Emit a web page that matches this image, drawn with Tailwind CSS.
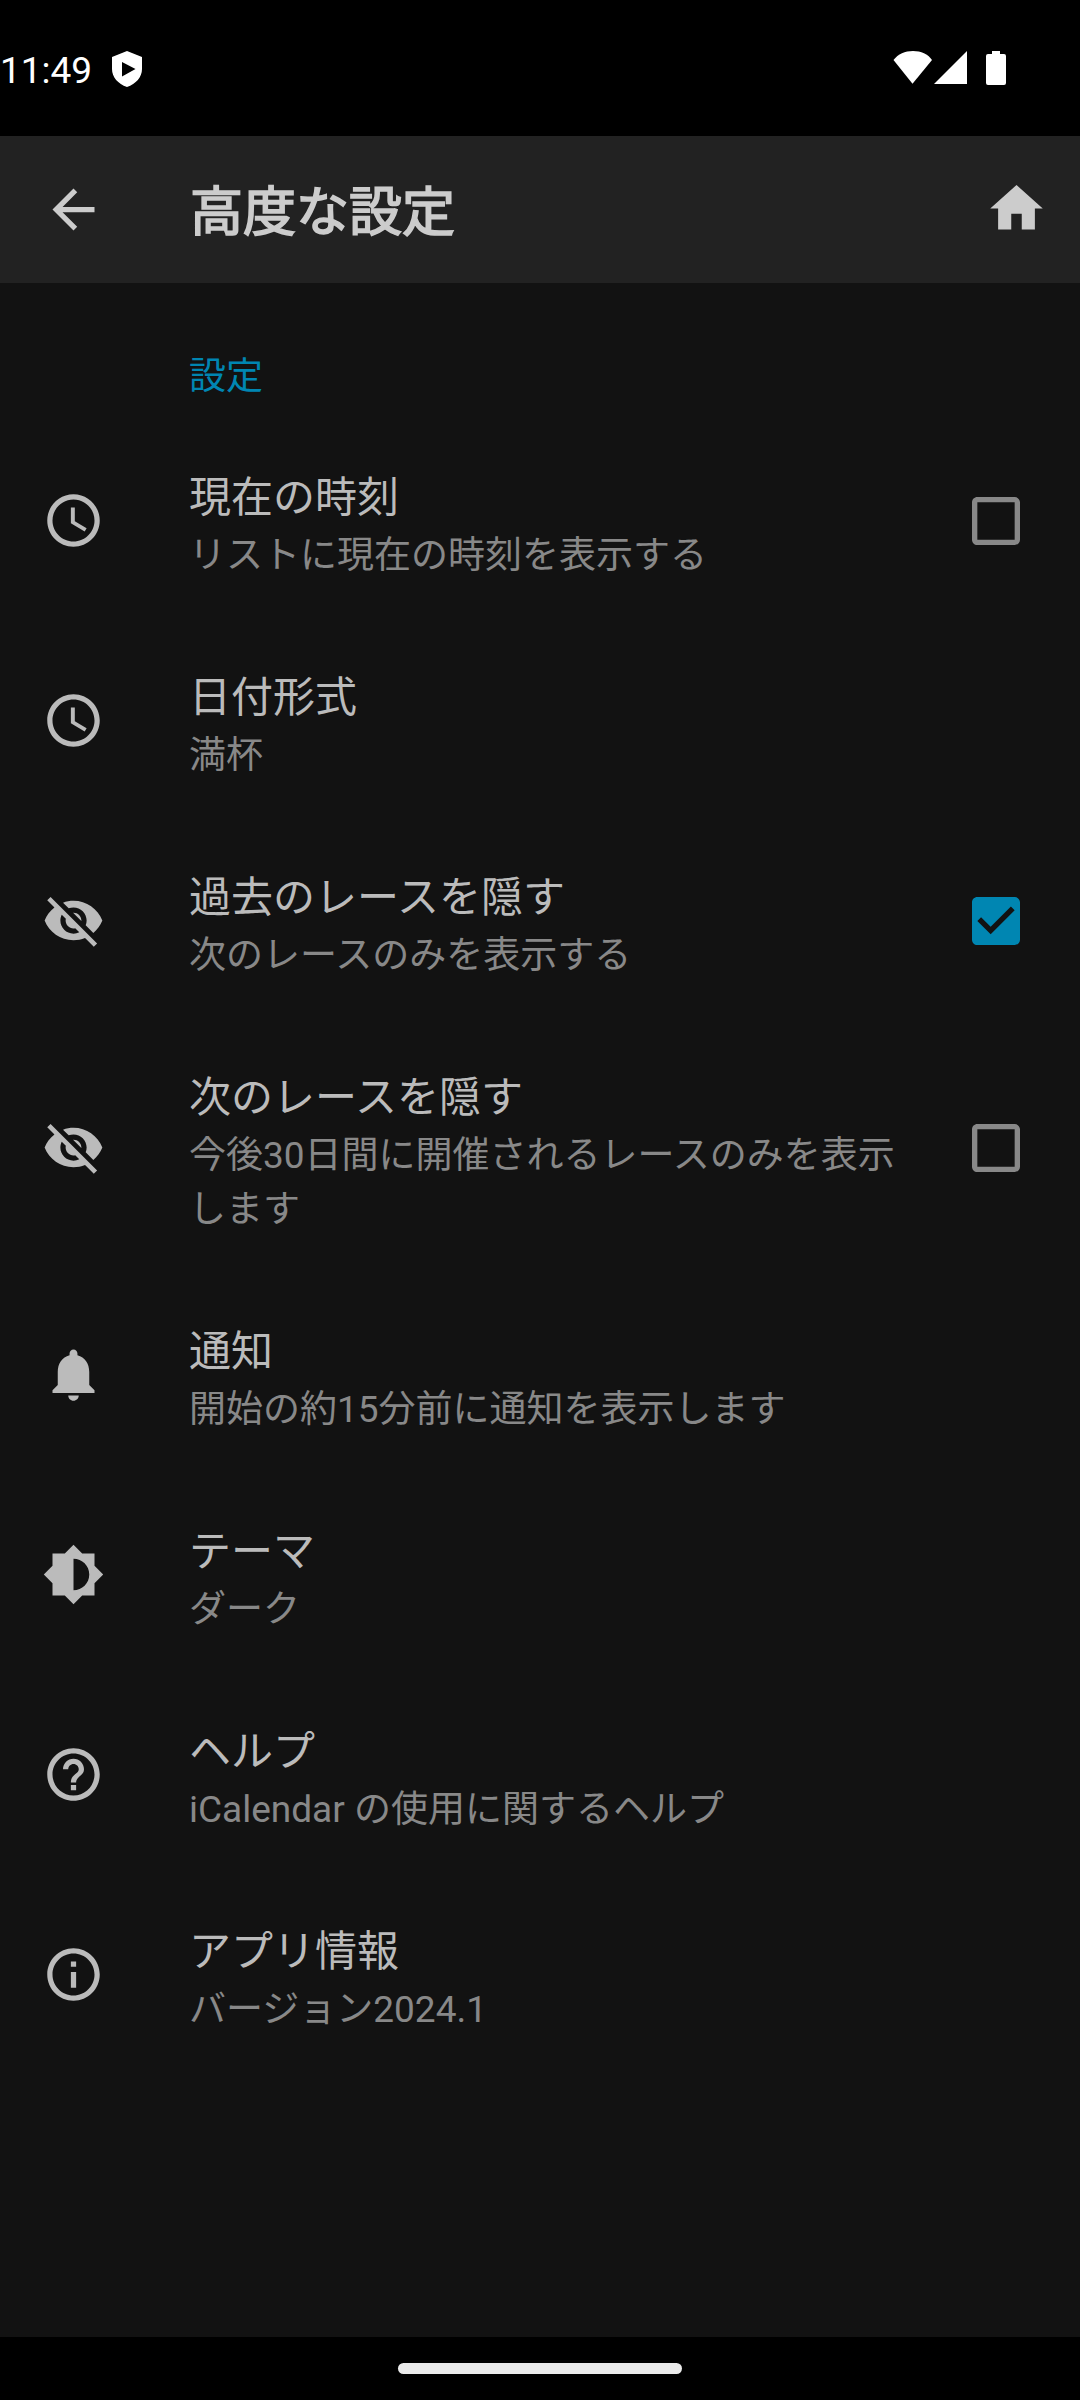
<!DOCTYPE html>
<html lang="ja">
<head>
<meta charset="utf-8">
<title>高度な設定</title>
<script src="https://cdn.jsdelivr.net/npm/@tailwindcss/browser@4"></script>
</head>
<body class="bg-black">
<svg class="hidden">
  <symbol id="clock" viewBox="0 0 24 24"><path d="M11.99 2C6.47 2 2 6.48 2 12s4.47 10 9.99 10C17.52 22 22 17.52 22 12S17.52 2 11.99 2zM12 20c-4.42 0-8-3.58-8-8s3.58-8 8-8 8 3.58 8 8-3.58 8-8 8zM12.5 7H11v6l5.25 3.15.75-1.23-4.5-2.67z"/></symbol>
  <symbol id="eye-off" viewBox="0 0 24 24"><path d="M12 7c2.76 0 5 2.24 5 5 0 .65-.13 1.26-.36 1.83l2.92 2.92c1.51-1.26 2.7-2.89 3.43-4.75-1.73-4.39-6-7.5-11-7.5-1.4 0-2.74.25-3.98.7l2.16 2.16C10.74 7.13 11.35 7 12 7zM2 4.27l2.28 2.28.46.46C3.08 8.3 1.78 10.02 1 12c1.73 4.39 6 7.5 11 7.5 1.55 0 3.03-.3 4.38-.84l.42.42L19.73 22 21 20.73 3.27 3 2 4.27zM7.53 9.8l1.55 1.55c-.05.21-.08.43-.08.65 0 1.66 1.34 3 3 3 .22 0 .44-.03.65-.08l1.55 1.55c-.67.33-1.41.53-2.2.53-2.76 0-5-2.24-5-5 0-.79.2-1.53.53-2.2zm4.31-.78l3.15 3.15.02-.16c0-1.66-1.34-3-3-3l-.17.01z"/></symbol>
  <symbol id="box" viewBox="0 0 24 24"><path d="M19 5v14H5V5h14m0-2H5c-1.1 0-2 .9-2 2v14c0 1.1.9 2 2 2h14c1.1 0 2-.9 2-2V5c0-1.1-.9-2-2-2z"/></symbol>
</svg>
<div class="flex h-[2400px] w-[1080px] flex-col overflow-hidden font-[Roboto,'Noto_Sans_CJK_JP',sans-serif]">

  <!-- Status bar -->
  <div class="flex h-[136px] shrink-0 items-start justify-between pr-[74px] text-white">
    <div class="flex items-start pt-[51px]">
      <span class="w-[112px] text-[37px] leading-[39px]">11:49</span>
      <svg class="h-[36px] w-[30px]" viewBox="0 0 30 36" fill="currentColor"><path fill-rule="evenodd" d="M15 0 30 6V18C30 26 24 33 15 36 6 33 0 26 0 18V6ZM10 11V25.5L23.5 18Z"/></svg>
    </div>
    <div class="flex items-start pt-[51px]">
      <svg class="h-[33px] w-[40px]" viewBox="0 0 40 33" fill="currentColor"><path d="M.5 9C5 3 12 0 20 0s15 3 19 9L19.500 32.700Z"/></svg>
      <svg class="ml-px h-[33px] w-[33px]" viewBox="0 0 33 33" fill="currentColor"><path d="M33 0V33H0Z"/></svg>
      <svg class="ml-[19px] h-[34px] w-[20px]" viewBox="0 0 20 34" fill="currentColor"><path d="M6 0h8v3h4a2 2 0 0 1 2 2v27a2 2 0 0 1-2 2H2a2 2 0 0 1-2-2V5a2 2 0 0 1 2-2h4z"/></svg>
    </div>
  </div>

  <!-- App bar -->
  <header class="flex h-[147px] shrink-0 items-center bg-[#222222] pr-8 pl-[42px] text-[#cccccc]">
    <svg class="size-[63px]" viewBox="0 0 24 24" fill="currentColor"><path d="M20 11H7.830l5.590-5.590L12 4l-8 8 8 8 1.410-1.410L7.830 13H20v-2z"/></svg>
    <h1 class="ml-[85px] flex-1 pt-1.5 text-[53px] leading-[60px] font-normal [-webkit-text-stroke:1.700px_#cccccc]">高度な設定</h1>
    <svg class="mb-0.5 size-[63px]" viewBox="0 0 24 24" fill="currentColor"><path d="M10 20v-6h4v6h5v-8h3L12 3 2 12h3v8z"/></svg>
  </header>

  <!-- Preferences -->
  <main class="flex-1 bg-[#121212] text-[#bbbbbb]">
    <h2 class="h-[138px] pt-[67px] pl-[189px] text-[37px] leading-[54px] text-[#0086b2]">設定</h2>

    <section class="flex items-center pr-[42px] pl-[42px]">
      <svg class="mr-[84px] mb-px size-[63px] shrink-0" fill="currentColor"><use href="#clock"/></svg>
      <div class="flex-1 pt-[47px] pb-[38px]">
        <p class="text-[42px] leading-[60px]">現在の時刻</p>
        <p class="mt-px text-[37px] leading-[54px] text-[#888888]">リストに現在の時刻を表示する</p>
      </div>
      <div class="ml-[42px] flex w-[84px] justify-center text-[#888888]"><svg class="size-16" fill="currentColor"><use href="#box"/></svg></div>
    </section>

    <section class="flex items-center pr-[42px] pl-[42px]">
      <svg class="mr-[84px] mb-px size-[63px] shrink-0" fill="currentColor"><use href="#clock"/></svg>
      <div class="flex-1 pt-[47px] pb-[38px]">
        <p class="text-[42px] leading-[60px]">日付形式</p>
        <p class="mt-px text-[37px] leading-[54px] text-[#888888]">満杯</p>
      </div>
    </section>

    <section class="flex items-center pr-[42px] pl-[42px]">
      <svg class="mr-[84px] mb-px size-[63px] shrink-0" fill="currentColor"><use href="#eye-off"/></svg>
      <div class="flex-1 pt-[47px] pb-[38px]">
        <p class="text-[42px] leading-[60px]">過去のレースを隠す</p>
        <p class="mt-px text-[37px] leading-[54px] text-[#888888]">次のレースのみを表示する</p>
      </div>
      <div class="ml-[42px] flex w-[84px] justify-center text-[#0086b2]"><svg class="size-16" viewBox="0 0 24 24" fill="currentColor"><path d="M19 3H5c-1.110 0-2 .9-2 2v14c0 1.100.89 2 2 2h14c1.110 0 2-.9 2-2V5c0-1.100-.89-2-2-2zm-9 14l-5-5 1.410-1.410L10 14.170l7.590-7.590L19 8l-9 9z"/></svg></div>
    </section>

    <section class="flex items-center pr-[42px] pl-[42px]">
      <svg class="mr-[84px] mb-px size-[63px] shrink-0" fill="currentColor"><use href="#eye-off"/></svg>
      <div class="flex-1 pt-[47px] pb-[38px]">
        <p class="text-[42px] leading-[60px]">次のレースを隠す</p>
        <p class="mt-px text-[37px] leading-[54px] text-[#888888]">今後30日間に開催されるレースのみを表示します</p>
      </div>
      <div class="ml-[42px] flex w-[84px] justify-center text-[#888888]"><svg class="size-16" fill="currentColor"><use href="#box"/></svg></div>
    </section>

    <section class="flex items-center pr-[42px] pl-[42px]">
      <svg class="mr-[84px] mb-px size-[63px] shrink-0" viewBox="0 0 24 24" fill="currentColor"><path d="M12 22c1.100 0 2-.9 2-2h-4c0 1.100.89 2 2 2zm6-6v-5c0-3.070-1.640-5.640-4.500-6.320V4c0-.83-.67-1.500-1.500-1.500s-1.500.67-1.500 1.500v.68C7.630 5.360 6 7.920 6 11v5l-2 2v1h16v-1l-2-2z"/></svg>
      <div class="flex-1 pt-[47px] pb-[38px]">
        <p class="text-[42px] leading-[60px]">通知</p>
        <p class="mt-px text-[37px] leading-[54px] text-[#888888]">開始の約15分前に通知を表示します</p>
      </div>
    </section>

    <section class="flex items-center pr-[42px] pl-[42px]">
      <svg class="mr-[84px] mb-px size-[63px] shrink-0" viewBox="0 0 24 24" fill="currentColor"><path d="M20 15.310L23.310 12 20 8.690V4h-4.690L12 .69 8.690 4H4v4.690L.69 12 4 15.310V20h4.690L12 23.310 15.310 20H20v-4.690zM12 18V6c3.310 0 6 2.690 6 6s-2.690 6-6 6z"/></svg>
      <div class="flex-1 pt-[47px] pb-[38px]">
        <p class="text-[42px] leading-[60px]">テーマ</p>
        <p class="mt-px text-[37px] leading-[54px] text-[#888888]">ダーク</p>
      </div>
    </section>

    <section class="flex items-center pr-[42px] pl-[42px]">
      <svg class="mr-[84px] mb-px size-[63px] shrink-0" viewBox="0 0 24 24" fill="currentColor"><path d="M11 18h2v-2h-2v2zm1-16C6.480 2 2 6.480 2 12s4.480 10 10 10 10-4.480 10-10S17.520 2 12 2zm0 18c-4.410 0-8-3.590-8-8s3.590-8 8-8 8 3.590 8 8-3.590 8-8 8zm0-14c-2.210 0-4 1.790-4 4h2c0-1.100.9-2 2-2s2 .9 2 2c0 2-3 1.750-3 5h2c0-2.250 3-2.500 3-5 0-2.210-1.790-4-4-4z"/></svg>
      <div class="flex-1 pt-[47px] pb-[38px]">
        <p class="text-[42px] leading-[60px]">ヘルプ</p>
        <p class="mt-px text-[37px] leading-[54px] text-[#888888]">iCalendar の使用に関するヘルプ</p>
      </div>
    </section>

    <section class="flex items-center pr-[42px] pl-[42px]">
      <svg class="mr-[84px] mb-px size-[63px] shrink-0" viewBox="0 0 24 24" fill="currentColor"><path d="M11 17h2v-6h-2v6zm1-15C6.480 2 2 6.480 2 12s4.480 10 10 10 10-4.480 10-10S17.520 2 12 2zm0 18c-4.410 0-8-3.590-8-8s3.590-8 8-8 8 3.590 8 8-3.590 8-8 8zM11 9h2V7h-2v2z"/></svg>
      <div class="flex-1 pt-[47px] pb-[38px]">
        <p class="text-[42px] leading-[60px]">アプリ情報</p>
        <p class="mt-px text-[37px] leading-[54px] text-[#888888]">バージョン2024.1</p>
      </div>
    </section>
  </main>

  <!-- Gesture bar -->
  <div class="flex h-[63px] shrink-0 justify-center pt-[26px]">
    <div class="h-[11px] w-[284px] rounded-full bg-[#ebebeb]"></div>
  </div>
</div>
</body>
</html>
